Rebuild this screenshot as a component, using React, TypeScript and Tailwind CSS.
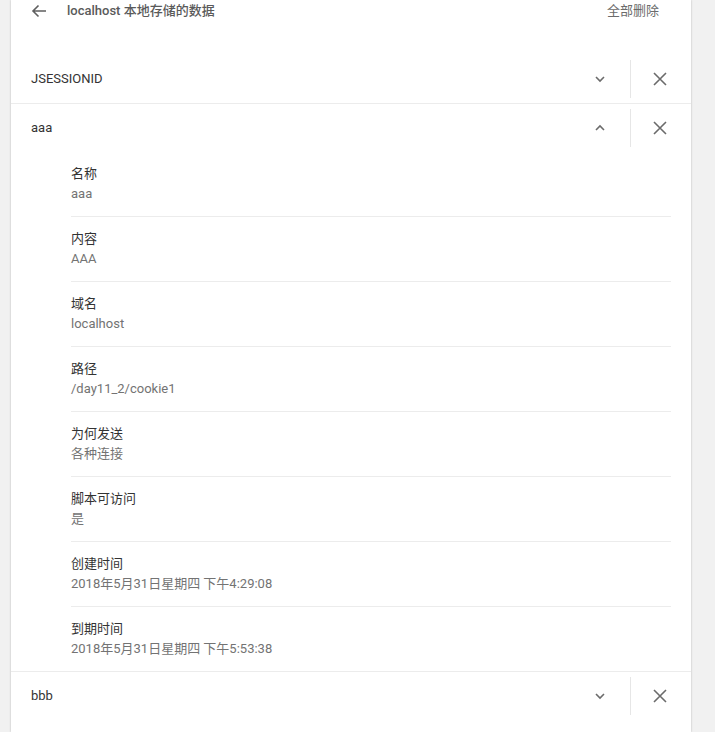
import React from "react";

const font = {
  fontFamily: 'Roboto, "Noto Sans CJK SC", "Liberation Sans", sans-serif',
};

type Field = { label: string; value: string };

const fields: Field[] = [
  { label: "名称", value: "aaa" },
  { label: "内容", value: "AAA" },
  { label: "域名", value: "localhost" },
  { label: "路径", value: "/day11_2/cookie1" },
  { label: "为何发送", value: "各种连接" },
  { label: "脚本可访问", value: "是" },
  { label: "创建时间", value: "2018年5月31日星期四 下午4:29:08" },
  { label: "到期时间", value: "2018年5月31日星期四 下午5:53:38" },
];

function Chevron({ up }: { up?: boolean }) {
  return (
    <svg width="12" height="12" viewBox="0 0 12 12" fill="none">
      <path
        d={up ? "M2 8 L6 4 L10 8" : "M2 4 L6 8 L10 4"}
        stroke="#6b6b6b"
        strokeWidth="1.6"
      />
    </svg>
  );
}

function CloseIcon() {
  return (
    <svg width="14" height="14" viewBox="0 0 14 14" fill="none">
      <path d="M1 1 L13 13 M13 1 L1 13" stroke="#6b6b6b" strokeWidth="1.6" />
    </svg>
  );
}

function CookieRow({ name, open }: { name: string; open?: boolean }) {
  return (
    <div className="flex items-center h-12 pl-5">
      <div className="flex-1 text-[13px] text-[#333]">{name}</div>
      <button className="w-10 h-10 flex items-center justify-center">
        <Chevron up={open} />
      </button>
      <div className="ml-[10px] w-px h-[38px] bg-[#e6e6e6]" />
      <button className="w-[58px] h-10 flex items-center justify-center mr-[2px]">
        <CloseIcon />
      </button>
    </div>
  );
}

export default function App() {
  return (
    <div className="min-h-[732px] bg-[#f1f1f1] overflow-hidden" style={font}>
      <div className="ml-[11px] w-[680px] min-h-[732px] bg-white shadow-[0_0_2px_rgba(0,0,0,0.25)]">
        <div className="flex items-center h-[22px] pl-5 pr-[32px]">
          <svg width="16" height="16" viewBox="0 0 16 16" fill="none">
            <path d="M15 8 H2 M7.5 2.5 L2 8 L7.5 13.5" stroke="#5f5f5f" strokeWidth="1.6" />
          </svg>
          <div className="ml-5 flex-1 text-[13px] font-medium text-[#5a5a5a]">
            localhost 本地存储的数据
          </div>
          <div className="text-[13px] text-[#6b6b6b]">全部删除</div>
        </div>

        <div className="mt-[33px]">
          <CookieRow name="JSESSIONID" />
          <div className="border-t border-[#ececec]">
            <CookieRow name="aaa" open />
            <div className="ml-[60px] mr-5">
              {fields.map((f, i) => (
                <div
                  key={f.label}
                  className={`py-3 ${
                    i < fields.length - 1 ? "border-b border-[#ececec]" : ""
                  }`}
                >
                  <div className="text-[13px] leading-5 text-[#333]">{f.label}</div>
                  <div className="text-[13px] leading-5 text-[#737373]">{f.value}</div>
                </div>
              ))}
            </div>
          </div>
          <div className="border-t border-[#ececec]">
            <CookieRow name="bbb" />
          </div>
        </div>
      </div>
    </div>
  );
}
